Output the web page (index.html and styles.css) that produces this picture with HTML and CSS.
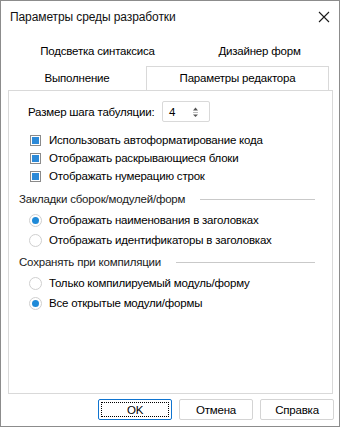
FILE: index.html
```html
<!DOCTYPE html>
<html lang="ru">
<head>
<meta charset="utf-8">
<link rel="stylesheet" href="styles.css">
</head>
<body>
<div class="window">
  <div class="titlebar">
    <span class="title">Параметры среды разработки</span>
    <svg class="close" width="12" height="12" viewBox="0 0 12 12"><path d="M1 1L11 11M11 1L1 11" stroke="#1a1a1a" stroke-width="1.1" fill="none"/></svg>
  </div>
  <div class="tabs">
    <div class="tabrow row1">
      <div class="tab t1">Подсветка синтаксиса</div>
      <div class="tab t2">Дизайнер форм</div>
    </div>
    <div class="tabrow row2">
      <div class="tab t3">Выполнение</div>
      <div class="tab active">Параметры редактора</div>
    </div>
  </div>
  <div class="panel">
    <div class="tabsize">
      <span class="label">Размер шага табуляции:</span>
      <div class="spin">
        <span class="spinval">4</span>
        <svg class="arrows" width="7" height="12" viewBox="0 0 7 12"><path d="M3.5 1.5L6 4.5H1Z" fill="#555"/><path d="M1 6.5H6" stroke="#bbb" stroke-width="1"/><path d="M1 8.5H6L3.5 11Z" fill="#555"/></svg>
      </div>
    </div>
    <div class="checks">
      <div class="item"><span class="cb"><span class="cbfill"></span></span><span>Использовать автоформатирование кода</span></div>
      <div class="item"><span class="cb"><span class="cbfill"></span></span><span>Отображать раскрывающиеся блоки</span></div>
      <div class="item"><span class="cb"><span class="cbfill"></span></span><span>Отображать нумерацию строк</span></div>
    </div>
    <div class="section s1"><span>Закладки сборок/модулей/форм</span><span class="line"></span></div>
    <div class="radios">
      <div class="item ritem"><span class="rb on"></span><span>Отображать наименования в заголовках</span></div>
      <div class="item ritem"><span class="rb"></span><span>Отображать идентификаторы в заголовках</span></div>
    </div>
    <div class="section s2"><span>Сохранять при компиляции</span><span class="line"></span></div>
    <div class="radios">
      <div class="item ritem"><span class="rb"></span><span>Только компилируемый модуль/форму</span></div>
      <div class="item ritem"><span class="rb on"></span><span>Все открытые модули/формы</span></div>
    </div>
  </div>
  <div class="buttons">
    <button class="btn ok"><span class="focus">OK</span></button>
    <button class="btn">Отмена</button>
    <button class="btn">Справка</button>
  </div>
</div>
</body>
</html>
```
FILE: styles.css
```css
* { box-sizing: border-box; }
html, body { margin: 0; padding: 0; background: #fff; }
body {
  font-family: "Liberation Sans", Arial, sans-serif;
  font-size: 11.5px;
  letter-spacing: -0.2px;
  color: #000;
  white-space: nowrap;
}
.window {
  width: 340px;
  height: 427px;
  border: 1px solid #8c8c8c;
  background: #fff;
  display: flex;
  flex-direction: column;
}
.titlebar {
  height: 31px;
  display: flex;
  align-items: center;
  justify-content: space-between;
  padding: 0 9px 0 9px;
}
.title { font-size: 12px; letter-spacing: -0.1px; color: #111; }
.close { display: block; margin-right: 0; }
.tabs { display: flex; flex-direction: column; }
.tabrow { display: flex; padding-left: 7px; }
.row1 { margin-top: 8px; height: 22px; }
.row2 { margin-top: 4px; height: 24px; }
.tab {
  display: flex;
  align-items: center;
  justify-content: center;
  color: #000;
}
.t1 { width: 179px; }
.t2 { width: 145px; }
.t3 { width: 138px; height: 23px; }
.active {
  width: 183px;
  height: 24px;
  border: 1px solid #d9d9d9;
  border-bottom: none;
  background: #fff;
  position: relative;
  z-index: 1;
  margin-bottom: -1px;
  padding-bottom: 1px;
}
.panel {
  margin: 0 6px 0 7px;
  height: 304px;
  border: 1px solid #d9d9d9;
  padding: 10px 17px 0 10px;
  display: flex;
  flex-direction: column;
}
.tabsize {
  display: flex;
  align-items: center;
  height: 21px;
  padding-left: 9px;
}
.tabsize .label { width: 134px; flex: none; }
.spin {
  width: 48px;
  height: 21px;
  border: 1px solid #d9d9d9;
  border-radius: 2px;
  display: flex;
  align-items: center;
  justify-content: space-between;
  padding: 0 10px 0 6px;
}
.arrows { display: block; }
.checks { margin-top: 9px; display: flex; flex-direction: column; }
.item {
  display: flex;
  align-items: center;
  height: 18px;
  padding-left: 11px;
}
.cb {
  width: 11px;
  height: 11px;
  border: 1px solid #8a8a8a;
  padding: 1px;
  margin-right: 8px;
  flex: none;
}
.cbfill { display: block; width: 7px; height: 7px; background: #2c8ad8; }
.section {
  display: flex;
  align-items: center;
  height: 18px;
  color: #1a1a1a;
}
.s1 { margin-top: 5px; }
.s2 { margin-top: 3px; }
.line { flex: 1; height: 1px; background: #c9c9c9; margin-left: 15px; }
.radios { margin-top: 2px; display: flex; flex-direction: column; }
.ritem { height: 20px; padding-left: 10px; }
.rb {
  width: 13px;
  height: 13px;
  border: 1px solid #cfcfcf;
  border-radius: 50%;
  margin-right: 7px;
  flex: none;
  display: flex;
  align-items: center;
  justify-content: center;
}
.rb.on::after {
  content: "";
  width: 7px;
  height: 7px;
  border-radius: 50%;
  background: #1f8ad8;
}
.buttons {
  display: flex;
  justify-content: flex-end;
  gap: 7px;
  margin-top: 5px;
  padding-right: 5px;
}
.btn {
  width: 74px;
  height: 21px;
  border: 1px solid #d4d4d4;
  border-radius: 2px;
  background: #fff;
  font-family: "Liberation Sans", Arial, sans-serif;
  font-size: 11.5px;
  letter-spacing: -0.2px;
  color: #000;
  padding: 0;
  display: flex;
  align-items: center;
  justify-content: center;
}
.btn.ok { border-color: #0f74d0; padding: 2px; }
.focus {
  width: 100%;
  height: 100%;
  border: 1px dotted #000;
  display: flex;
  align-items: center;
  justify-content: center;
}
```
